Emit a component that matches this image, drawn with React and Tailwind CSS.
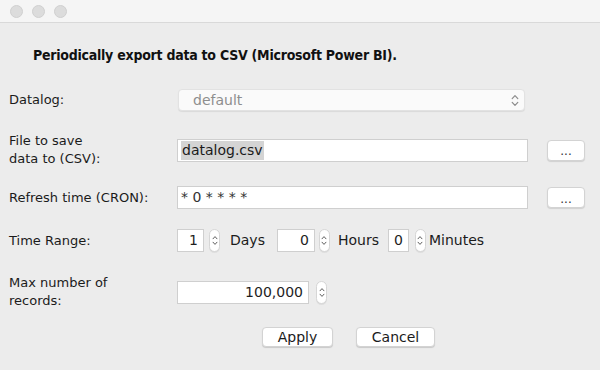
import React from 'react';

const font = { fontFamily: '"DejaVu Sans", "Liberation Sans", sans-serif' };
const titleFont = { fontFamily: '"DejaVu Sans Condensed", "Liberation Sans", sans-serif' };

function Chevrons({ className = '' }) {
  return (
    <svg width="8" height="13" viewBox="0 0 8 13" className={className} fill="none" stroke="#8c8c8c" strokeWidth="1.2" strokeLinecap="round" strokeLinejoin="round">
      <path d="M1.2 4.6 L4 1.6 L6.8 4.6" />
      <path d="M1.2 8.4 L4 11.4 L6.8 8.4" />
    </svg>
  );
}

function Stepper() {
  return (
    <div className="w-[11px] h-[23px] rounded-full bg-white border border-[#d6d6d6] shadow-[0_1px_0_rgba(0,0,0,0.06)] flex items-center justify-center">
      <svg width="6" height="13" viewBox="0 0 6 13" fill="none" stroke="#5f5f5f" strokeWidth="1" strokeLinecap="round" strokeLinejoin="round">
        <path d="M1 4.8 L3 2.6 L5 4.8" />
        <path d="M1 8.2 L3 10.4 L5 8.2" />
      </svg>
    </div>
  );
}

function NumField({ width, value }) {
  return (
    <div className={`${width} h-[23px] bg-white border border-[#cfcfcf] flex items-center justify-end pr-[5px] text-[14px] text-[#1e1e1e]`}>
      {value}
    </div>
  );
}

function DotsButton() {
  return (
    <div className="ml-[19px] w-[38px] h-[21px] rounded-[4px] bg-white border border-[#d3d3d3] shadow-[0_1px_1px_rgba(0,0,0,0.12)] flex items-center justify-center text-[12px] text-[#333] leading-none pt-[2px]">
      ...
    </div>
  );
}

export default function App() {
  return (
    <div className="w-[600px] h-[370px] bg-[#ececec] text-[#1b1b1b] overflow-hidden" style={font}>
      <div className="h-[23px] bg-[#f5f5f5] border-b border-[#d9d9d9] flex items-center pl-[10px] gap-[9px]">
        <div className="w-[13px] h-[13px] rounded-full bg-[#dcdcdc] border border-[#d0d0d0]" />
        <div className="w-[13px] h-[13px] rounded-full bg-[#dcdcdc] border border-[#d0d0d0]" />
        <div className="w-[13px] h-[13px] rounded-full bg-[#dcdcdc] border border-[#d0d0d0]" />
      </div>

      <div className="mt-[22px] pl-[33px] h-[20px] leading-[20px] text-[14px] tracking-[-0.25px] font-bold text-[#111]" style={titleFont}>
        Periodically export data to CSV (Microsoft Power BI).
      </div>

      <div className="pl-[9px] text-[13px]">
        <div className="mt-[24px] h-[22px] flex items-center">
          <div className="w-[169px]">Datalog:</div>
          <div className="w-[347px] h-[22px] rounded-[4px] bg-[#fafafa] border border-[#e2e2e2] shadow-[0_1px_1px_rgba(0,0,0,0.08)] flex items-center justify-between pl-[14px] pr-[5px] text-[14px] text-[#8e8e8e]">
            <span>default</span>
            <Chevrons />
          </div>
        </div>

        <div className="mt-[21px] h-[36px] flex items-center">
          <div className="w-[168px] leading-[18px]">
            File to save
            <br />
            data to (CSV):
          </div>
          <div className="w-[351px] h-[23px] bg-white border border-[#cfcfcf] flex items-center pl-[3px] text-[14px]">
            <span className="bg-[#d4d4d4] px-[1px] leading-[19px]">datalog.csv</span>
          </div>
          <DotsButton />
        </div>

        <div className="mt-[18px] h-[23px] flex items-center">
          <div className="w-[168px]">Refresh time (CRON):</div>
          <div className="w-[351px] h-[23px] bg-white border border-[#cfcfcf] flex items-center pl-[3px] text-[14px] text-[#333]">
            * 0 * * * *
          </div>
          <DotsButton />
        </div>

        <div className="mt-[20px] h-[23px] flex items-center">
          <div className="w-[168px]">Time Range:</div>
          <NumField width="w-[27px]" value="1" />
          <div className="ml-[5px]"><Stepper /></div>
          <div className="ml-[10px] text-[14px]">Days</div>
          <div className="ml-[12px]"><NumField width="w-[38px]" value="0" /></div>
          <div className="ml-[4px]"><Stepper /></div>
          <div className="ml-[8px] text-[14px]">Hours</div>
          <div className="ml-[9px]"><NumField width="w-[21px]" value="0" /></div>
          <div className="ml-[6px]"><Stepper /></div>
          <div className="ml-[3px] text-[14px]">Minutes</div>
        </div>

        <div className="mt-[22px] h-[36px] flex items-center">
          <div className="w-[168px] leading-[18px]">
            Max number of
            <br />
            records:
          </div>
          <NumField width="w-[132px]" value="100,000" />
          <div className="ml-[7px]"><Stepper /></div>
        </div>

        <div className="mt-[17px] flex items-center pl-[253px] gap-[23px] text-[14px]">
          <div className="w-[71px] h-[20px] rounded-[4px] bg-white border border-[#d3d3d3] shadow-[0_1px_1px_rgba(0,0,0,0.15)] flex items-center justify-center">
            Apply
          </div>
          <div className="w-[79px] h-[20px] rounded-[4px] bg-white border border-[#d3d3d3] shadow-[0_1px_1px_rgba(0,0,0,0.15)] flex items-center justify-center">
            Cancel
          </div>
        </div>
      </div>
    </div>
  );
}
